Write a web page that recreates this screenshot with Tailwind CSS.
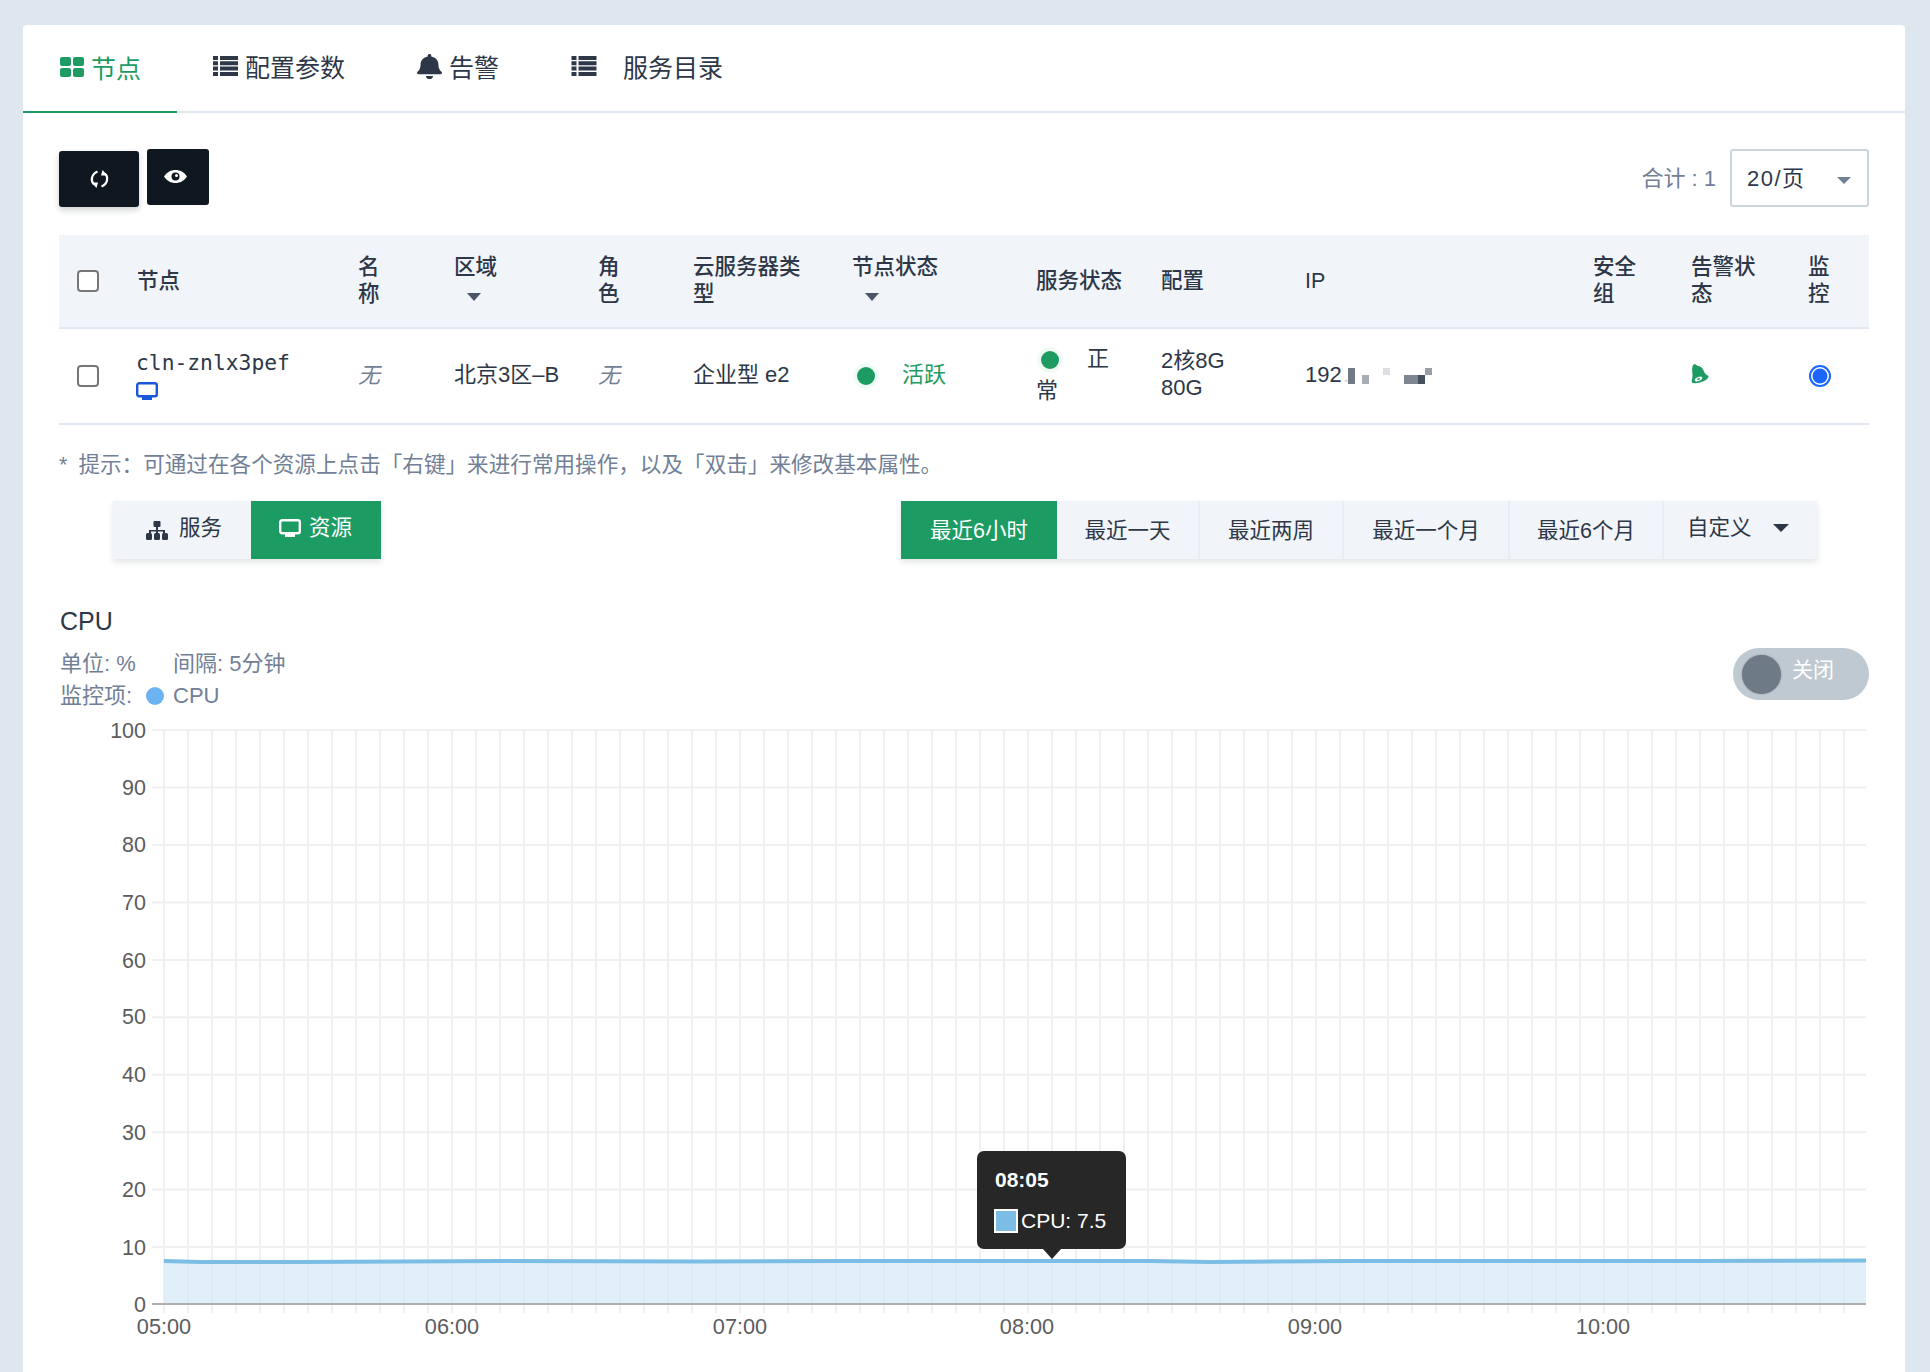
<!DOCTYPE html>
<html lang="zh">
<head>
<meta charset="utf-8">
<script src="https://cdn.jsdelivr.net/npm/@tailwindcss/browser@4"></script>
</head>
<body class="h-[1372px] overflow-hidden bg-[#dee6ef] font-['Liberation_Sans','Noto_Sans_CJK_SC',sans-serif] text-[22px] text-[#2d3748]">
<div class="pt-[25px] pl-[23px] pr-[25px]">
<main class="h-[1400px] rounded-[4px] bg-white">
  <!-- tabs -->
  <nav class="flex h-[88px] border-b-2 border-[#e2e8f0] text-[25px]">
    <div class="relative flex h-[88px] items-center gap-[7px] pb-[4px] pl-[37px] pr-[36px] text-[#1c9b62]">
      <svg class="h-[20px] w-[24px]" viewBox="0 0 24 20" fill="#1c9b62"><rect width="11" height="9" rx="2"/><rect x="13" width="11" height="9" rx="2"/><rect y="11" width="11" height="9" rx="2"/><rect x="13" y="11" width="11" height="9" rx="2"/></svg>
      <span class="translate-y-[3px]">节点</span>
      <span class="absolute bottom-0 left-0 right-0 h-[2px] bg-[#1c9b62]"></span>
    </div>
    <div class="flex items-center gap-[7px] px-[36px] pb-[4px]">
      <svg class="h-[20px] w-[25px]" viewBox="0 0 25 20" fill="#2d3748"><path d="M0 0h5v4H0zM7 0h18v4H7zM0 5.300h5v4H0zM7 5.300h18v4H7zM0 10.600h5v4H0zM7 10.600h18v4H7zM0 16h5v4H0zM7 16h18v4H7z"/></svg>
      <span class="translate-y-[3px]">配置参数</span>
    </div>
    <div class="flex items-center gap-[7px] px-[36px] pb-[4px]">
      <svg class="h-[25px] w-[25px]" viewBox="0 0 448 512" preserveAspectRatio="none" fill="#2d3748"><path d="M224 512c35.320 0 63.970-28.650 63.970-64H160.030c0 35.350 28.650 64 63.970 64zm215.390-149.710c-19.320-20.760-55.470-51.990-55.470-154.290 0-77.700-54.480-139.900-127.940-155.160V32c0-17.670-14.320-32-31.980-32s-31.980 14.330-31.980 32v20.840C118.560 68.100 64.080 130.300 64.080 208c0 102.300-36.150 133.530-55.470 154.290-6 6.450-8.660 14.160-8.610 21.710.110 16.400 12.980 32 32.100 32h383.800c19.120 0 32-15.600 32.100-32 .050-7.550-2.610-15.270-8.610-21.710z"/></svg>
      <span class="translate-y-[3px]">告警</span>
    </div>
    <div class="flex items-center gap-[26px] px-[36px] pb-[4px]">
      <svg class="h-[20px] w-[26px]" viewBox="0 0 25 20" fill="#2d3748"><path d="M0 0h5v4H0zM7 0h18v4H7zM0 5.300h5v4H0zM7 5.300h18v4H7zM0 10.600h5v4H0zM7 10.600h18v4H7zM0 16h5v4H0zM7 16h18v4H7z"/></svg>
      <span class="translate-y-[3px]">服务目录</span>
    </div>
  </nav>

  <div class="px-[36px] pt-[36px]">
    <!-- toolbar -->
    <div class="flex h-[58px] items-start justify-between">
      <div class="flex items-start gap-[8px]">
        <button class="mt-[2px] flex h-[56px] w-[80px] items-center justify-center rounded-[3px] bg-[#0f1720] shadow-[0_3px_6px_rgba(15,23,32,0.2)]">
          <svg class="h-[18px] w-[19px]" viewBox="0 0 19 18" fill="none" stroke="#fff" stroke-width="2.200"><path d="M7.500 1.500C1 4.500 .5 11 4 14.500"/><path d="M11.500 16.500C18 13.500 18.500 7 15 3.500"/><path d="M1.500 12.500h6.500L6.500 18z" fill="#fff" stroke="none"/><path d="M17.500 5.500h-6.500L12.500 0z" fill="#fff" stroke="none"/></svg>
        </button>
        <button class="flex h-[56px] w-[62px] items-start justify-center rounded-[3px] bg-[#0f1720] pr-[5px] pt-[21px]">
          <svg class="h-[13px] w-[23px]" viewBox="0 0 23 13"><path d="M0 6.500C3 2 7 0 11.500 0S20 2 23 6.500C20 11 16 13 11.500 13S3 11 0 6.500z" fill="#fff"/><circle cx="11.500" cy="6.500" r="4" fill="#0f1720"/><circle cx="12.500" cy="5.500" r="1.500" fill="#fff"/></svg>
        </button>
      </div>
      <div class="flex items-center gap-[14px]">
        <span class="text-[#718096]">合计 : 1</span>
        <div class="flex h-[58px] w-[139px] items-center justify-between rounded-[3px] border-2 border-[#cbd5e0] pl-[15px] pr-[16px]">
          <span class="tracking-[1.500px]">20/页</span>
          <span class="mt-[4px] h-0 w-0 border-x-[7px] border-t-[7px] border-x-transparent border-t-[#718096]"></span>
        </div>
      </div>
    </div>

    <!-- table -->
    <section class="mt-[28px]">
      <div class="grid h-[94px] grid-cols-[78px_221px_96px_144px_95px_159px_184px_125px_144px_288px_98px_117px_60px] items-center border-b-2 border-[#e2e8f0] bg-[#f1f5f9] text-[21.500px] font-medium leading-[27px]">
        <div class="pl-[18px]"><span class="block h-[22px] w-[22px] rounded-[4px] border-2 border-[#777] bg-white"></span></div>
        <div>节点</div>
        <div>名<br>称</div>
        <div>区域<br><span class="ml-[13px] inline-block h-0 w-0 border-x-[7px] border-t-[8px] border-x-transparent border-t-[#4a5568]"></span></div>
        <div>角<br>色</div>
        <div>云服务器类<br>型</div>
        <div>节点状态<br><span class="ml-[13px] inline-block h-0 w-0 border-x-[7px] border-t-[8px] border-x-transparent border-t-[#4a5568]"></span></div>
        <div>服务状态</div>
        <div>配置</div>
        <div>IP</div>
        <div>安全<br>组</div>
        <div>告警状<br>态</div>
        <div>监<br>控</div>
      </div>
      <div class="grid h-[96px] grid-cols-[78px_221px_96px_144px_95px_159px_184px_125px_144px_288px_98px_117px_60px] items-center border-b-2 border-[#e2e8f0] leading-[27px]">
        <div class="pl-[18px]"><span class="block h-[22px] w-[22px] rounded-[4px] border-2 border-[#777] bg-white"></span></div>
        <div class="-translate-y-[2px]">
          <div class="-ml-[1px] -translate-y-[1px] font-['DejaVu_Sans_Mono',monospace] text-[21.300px] leading-[27px]">cln-znlx3pef</div>
          <svg class="-ml-[1px] mt-[2px] h-[19px] w-[22px] translate-y-[3px]" viewBox="0 0 22 19"><rect x="1.200" y="1.200" width="19.600" height="13" rx="2" fill="none" stroke="#1a56db" stroke-width="2.400"/><path d="M6 15h10v3H6z" fill="#1a56db"/></svg>
        </div>
        <div class="-translate-y-[1px] italic text-[#718096]">无</div>
        <div class="-translate-y-[2px] whitespace-nowrap">北京3区–B</div>
        <div class="-translate-y-[1px] italic text-[#718096]">无</div>
        <div class="-translate-y-[2px]">企业型 e2</div>
        <div class="flex items-center gap-[27px] pl-[5px] text-[#1c9b62]">
          <span class="h-[18px] w-[18px] rounded-full bg-[#1c9b62] shadow-[0_0_0_4px_#f0fbf6]"></span>
          <span class="-translate-y-[2px]">活跃</span>
        </div>
        <div class="-translate-y-[1px] leading-[32px]">
          <span class="ml-[5px] mr-[28px] inline-block h-[18px] w-[18px] translate-y-[3px] rounded-full bg-[#1c9b62] shadow-[0_0_0_4px_#f0fbf6]"></span><span>正</span><br><span>常</span>
        </div>
        <div class="-translate-y-[2px]">2核8G<br>80G</div>
        <div class="flex items-center">
          <span class="w-[38px] -translate-y-[2px]">192</span><span class="w-[5px] -translate-y-[2px] text-[#cbd5e0]">.</span>
          <svg class="h-[16px] w-[94px]" viewBox="0 0 94 16"><rect x="0" y="0" width="7" height="16" fill="#6f7a86"/><rect x="14" y="7" width="7" height="9" fill="#a9adb8"/><rect x="35" y="0" width="7" height="7" fill="#dcdee2"/><rect x="56" y="7" width="14" height="9" fill="#7e858f"/><rect x="70" y="7" width="7" height="9" fill="#454f5d"/><rect x="77" y="0" width="7" height="7" fill="#9a9ea8"/></svg>
        </div>
        <div></div>
        <div class="-translate-y-[3px]">
          <svg class="h-[19px] w-[18px] overflow-visible" viewBox="0 0 18 19"><path d="M2.500 .5C4 0 5.500 .5 6.500 2c3.500 0 5.500 2.500 6.500 5.500.7 2 2 3.200 4.500 4.500.6 1.600-1.500 3.600-5 5.200C8.500 19 3.500 19.600 1.200 18.800-.2 17.500 1.700 14.500 1.500 11 1.300 7.500 .5 3 2.500 .5z" fill="#1c9b62"/><ellipse cx="7.500" cy="15" rx="4" ry="1.900" fill="#fff" transform="rotate(-22 7.500 15)"/><ellipse cx="7.500" cy="15" rx="1.500" ry=".8" fill="#1c9b62" transform="rotate(-22 7.500 15)"/></svg>
        </div>
        <div class="pl-[1px]">
          <svg class="h-[22px] w-[22px]" viewBox="0 0 22 22"><circle cx="11" cy="11" r="10" fill="none" stroke="#1a66ff" stroke-width="2"/><circle cx="11" cy="11" r="7.500" fill="#1a66ff"/></svg>
        </div>
      </div>
    </section>

    <p class="mt-[26px] text-[21.600px] leading-[27px] text-[#718096]"><span class="mr-[5px]">*</span> 提示：可通过在各个资源上点击「右键」来进行常用操作，以及「双击」来修改基本属性。</p>

    <!-- switchers -->
    <div class="mt-[23px] flex h-[58px] justify-between pl-[54px] pr-[52px] text-[21.500px]">
      <div class="flex shadow-[0_3px_6px_rgba(45,55,72,0.14)]">
        <div class="flex w-[138px] items-center bg-[#f1f5f9] pb-[4px] pl-[33px]">
          <svg class="mt-[4px] h-[19px] w-[22px]" viewBox="0 0 22 19" fill="#2d3748"><rect x="7.500" width="7" height="6" rx="1"/><path d="M10 6h2v3h7v3h-2v-1.500h-5V12h-2v-1.500H5V12H3V9h7z"/><rect y="12" width="6" height="7" rx="1.500"/><rect x="8" y="12" width="6" height="7" rx="1.500"/><rect x="16" y="12" width="6" height="7" rx="1.500"/></svg>
          <span class="ml-[11px]">服务</span>
        </div>
        <div class="flex w-[130px] items-center bg-[#1c9b62] pb-[4px] pl-[28px] text-white">
          <svg class="h-[19px] w-[22px]" viewBox="0 0 22 19"><rect x="1.200" y="1.200" width="19.600" height="13" rx="2" fill="none" stroke="#fff" stroke-width="2.400"/><path d="M6 15h10v3H6z" fill="#fff"/></svg>
          <span class="ml-[8px]">资源</span>
        </div>
      </div>
      <div class="flex shadow-[0_3px_6px_rgba(45,55,72,0.14)]">
        <div class="flex w-[156px] items-center justify-center bg-[#1c9b62] pt-[2px] text-white">最近6小时</div>
        <div class="flex w-[143px] items-center justify-center border-r-2 border-[#e9edf3] bg-[#f1f5f9] pt-[2px]">最近一天</div>
        <div class="flex w-[144px] items-center justify-center border-r-2 border-[#e9edf3] bg-[#f1f5f9] pt-[2px]">最近两周</div>
        <div class="flex w-[166px] items-center justify-center border-r-2 border-[#e9edf3] bg-[#f1f5f9] pt-[2px]">最近一个月</div>
        <div class="flex w-[154px] items-center justify-center border-r-2 border-[#e9edf3] bg-[#f1f5f9] pt-[2px]">最近6个月</div>
        <div class="flex w-[153px] items-center bg-[#f1f5f9] pb-[4px] pl-[23px]">
          <span>自定义</span>
          <span class="ml-[21px] h-0 w-0 border-x-[8px] border-t-[8px] border-x-transparent border-t-[#2d3748]"></span>
        </div>
      </div>
    </div>

    <!-- chart head -->
    <div class="mt-[46px]">
      <h2 class="pl-[1px] text-[25px] leading-[32px]">CPU</h2>
      <div class="relative mt-[11px] pl-[1px] leading-[32px] text-[#718096]">
        <div class="flex"><span class="w-[113px]">单位: %</span><span>间隔: 5分钟</span></div>
        <div class="flex items-center"><span class="w-[86px]">监控项:</span><span class="h-[18px] w-[18px] rounded-full bg-[#6db3f2]"></span><span class="ml-[9px]">CPU</span></div>
        <div class="absolute right-[0px] top-[0px] flex h-[52px] w-[136px] items-center rounded-full bg-[#bfc9d1] pl-[9px] text-[21px] text-white">
          <span class="h-[39px] w-[39px] rounded-full bg-[#6e7b87] shadow-[0_0_2px_rgba(0,0,0,.3)]"></span>
          <span class="ml-[11px] -translate-y-[4px]">关闭</span>
        </div>
      </div>
    </div>

    <!-- chart -->
    <div class="relative -mt-[2px] h-[662px] w-[1809px]">
      <svg class="h-[662px] w-[1809px]" viewBox="59 710 1809 662" font-family="Liberation Sans, sans-serif" font-size="21.500" fill="#5c5c5c">
        <defs>
          <pattern id="vg" x="164" y="0" width="24" height="1400" patternUnits="userSpaceOnUse"><rect x="-1" width="2" height="1400" fill="#f0f0f0"/><rect x="23" width="2" height="1400" fill="#f0f0f0"/></pattern>
        </defs>
        <rect x="163" y="730" width="1704" height="583" fill="url(#vg)"/>
        <g stroke="#f0f0f0" stroke-width="2">
          <path d="M152 730H1866M152 787.500H1866M152 845H1866M152 902.400H1866M152 959.900H1866M152 1017.300H1866M152 1074.700H1866M152 1132.200H1866M152 1189.600H1866M152 1247H1866"/>
        </g>
        <path d="M164 1261 L200 1262 L300 1262 L400 1261.500 L500 1261 L700 1261.500 L840 1261 L1000 1261 L1150 1261 L1210 1262 L1350 1261 L1500 1261 L1700 1261 L1866 1260.500 V1304 H164 Z" fill="#cfe7f4" fill-opacity=".65"/>
        <path d="M164 1261 L200 1262 L300 1262 L400 1261.500 L500 1261 L700 1261.500 L840 1261 L1000 1261 L1150 1261 L1210 1262 L1350 1261 L1500 1261 L1700 1261 L1866 1260.500" fill="none" stroke="#7cbde5" stroke-width="4"/>
        <path d="M152 1304H1866" stroke="#b0b0b0" stroke-width="2"/>
        <g text-anchor="end">
          <text x="146" y="738">100</text><text x="146" y="795">90</text><text x="146" y="852">80</text><text x="146" y="910">70</text><text x="146" y="968">60</text><text x="146" y="1024">50</text><text x="146" y="1082">40</text><text x="146" y="1140">30</text><text x="146" y="1197">20</text><text x="146" y="1255">10</text><text x="146" y="1312">0</text>
        </g>
        <g text-anchor="middle" font-size="21.700">
          <text x="164" y="1334">05:00</text><text x="452" y="1334">06:00</text><text x="740" y="1334">07:00</text><text x="1027" y="1334">08:00</text><text x="1315" y="1334">09:00</text><text x="1603" y="1334">10:00</text>
        </g>
      </svg>
      <!-- tooltip -->
      <div class="absolute left-[918px] top-[441px] h-[98px] w-[149px] rounded-[7px] bg-[#272727] font-['Liberation_Sans',sans-serif] text-[21px] text-white">
        <div class="pl-[18px] pt-[15px] font-bold leading-[27px]">08:05</div>
        <div class="mt-[15px] flex items-center pl-[17px] leading-[26px]">
          <span class="h-[24px] w-[24px] border-2 border-white bg-[#7cbde5]"></span>
          <span class="ml-[3px]">CPU: 7.5</span>
        </div>
        <span class="absolute left-[66px] top-[98px] h-0 w-0 border-x-[9px] border-t-[10px] border-x-transparent border-t-[#272727]"></span>
      </div>
    </div>
  </div>
</main>
</div>
</body>
</html>
